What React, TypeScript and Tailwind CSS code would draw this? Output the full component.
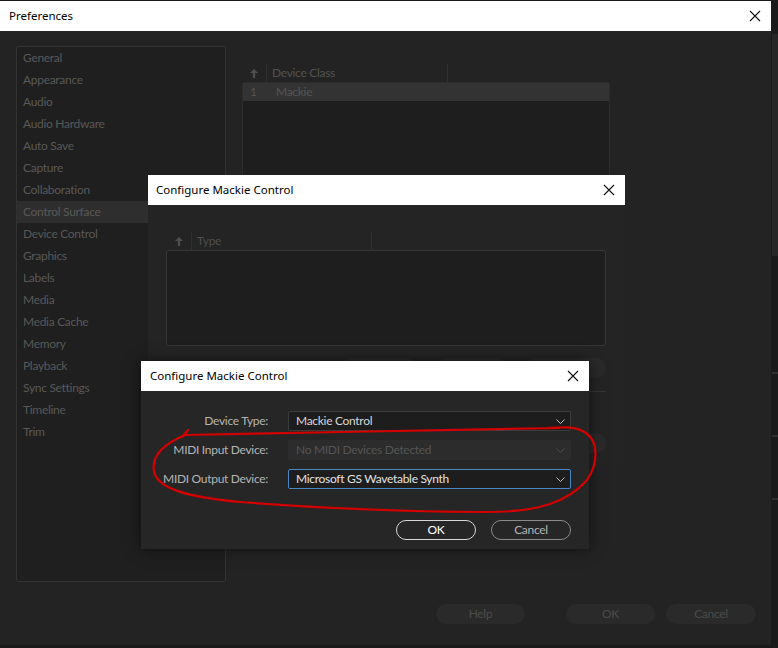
import React from 'react';

const sans = "font-['Noto_Sans',sans-serif]";
const ui = "font-['Lato',sans-serif] tracking-[-0.3px]";

const sections = [
  'General',
  'Appearance',
  'Audio',
  'Audio Hardware',
  'Auto Save',
  'Capture',
  'Collaboration',
  'Control Surface',
  'Device Control',
  'Graphics',
  'Labels',
  'Media',
  'Media Cache',
  'Memory',
  'Playback',
  'Sync Settings',
  'Timeline',
  'Trim',
];

function CloseX() {
  return (
    <svg width="12" height="12" viewBox="0 0 12 12" className="shrink-0">
      <path d="M1 1 L11 11 M11 1 L1 11" stroke="#111" strokeWidth="1.1" fill="none" />
    </svg>
  );
}

function SortArrow() {
  return (
    <svg width="8" height="9" viewBox="0 0 8 9">
      <path d="M4 0 L8 4 L5.2 4 L5.2 9 L2.8 9 L2.8 4 L0 4 Z" fill="#4e4e4e" />
    </svg>
  );
}

function Chevron({ color = '#bdbdbd' }: { color?: string }) {
  return (
    <svg width="9" height="5" viewBox="0 0 9 5" className="shrink-0">
      <path d="M0.5 0.5 L4.5 4.5 L8.5 0.5" stroke={color} strokeWidth="1" fill="none" />
    </svg>
  );
}

function TitleBar({ title, pl = 'pl-[8px]', pr = 'pr-[9px]' }: { title: string; pl?: string; pr?: string }) {
  return (
    <div className={`h-[30px] ${pl} ${pr} bg-white flex items-center justify-between text-[11.5px] tracking-normal text-black ${sans}`}>
      <span>{title}</span>
      <CloseX />
    </div>
  );
}

function GhostPill({ label, w }: { label: string; w: string }) {
  return (
    <div className={`${w} h-[20px] rounded-full bg-[#2a2a2a] text-[#4a4a4a] text-[12px] flex items-center justify-center`}>
      {label}
    </div>
  );
}

function Select({ value, state }: { value: string; state: 'normal' | 'disabled' | 'focus' }) {
  const box =
    state === 'disabled'
      ? 'bg-[#2c2c2c] border-[#2c2c2c] text-[#545454]'
      : state === 'focus'
        ? 'bg-[#1d1d1d] border-[#4b86c6] text-[#e2e2e2]'
        : 'bg-[#1d1d1d] border-[#3c3c3c] text-[#d6d6d6]';
  return (
    <div className={`w-[283px] h-[20px] border rounded-[2px] flex items-center justify-between pl-[7px] pr-[5px] text-[12px] ${box}`}>
      <span>{value}</span>
      <Chevron color={state === 'disabled' ? '#4a4a4a' : '#bdbdbd'} />
    </div>
  );
}

export default function App() {
  return (
    <div className={`relative w-[778px] h-[648px] bg-[#1a1a1a] overflow-hidden ${ui}`}>
      {/* window behind, right edge */}
      <div className="absolute left-[772px] top-[34px] w-[6px] h-[222px] bg-[#262626]" />
      <div className="absolute left-[772px] top-[372px] w-[6px] h-[2px] bg-[#303030]" />
      <div className="absolute left-[772px] top-[435px] w-[6px] h-[2px] bg-[#303030]" />
      <div className="absolute left-[772px] top-[498px] w-[6px] h-[2px] bg-[#303030]" />

      {/* Preferences window */}
      <div className="absolute left-0 top-0 w-[771px] h-[645px] flex flex-col bg-[#232323] border-t border-[#1a1a1a]">
        <TitleBar title="Preferences" pl="pl-[9px]" pr="pr-[10px]" />
        <div className="flex-1 flex gap-[16px] pl-[16px] pt-[15px]">
          <div className="w-[210px] h-[536px] bg-[#1f1f1f] border border-[#323232] rounded-[2px] text-[12px] text-[#585858]">
            {sections.map((s) => (
              <div
                key={s}
                className={`h-[22px] leading-[22px] px-[6px] ${s === 'Control Surface' ? 'bg-[#2e2e2e]' : ''}`}
              >
                {s}
              </div>
            ))}
          </div>
          <div className="pt-[18px] w-[368px]">
            <div className="flex items-center h-[18px] text-[12px] text-[#525252]">
              <div className="w-[25px] h-full flex items-center justify-center border-r border-[#303030]">
                <SortArrow />
              </div>
              <div className="w-[181px] h-full pl-[5px] flex items-center border-r border-[#303030]">Device Class</div>
            </div>
            <div className="h-[200px] bg-[#1e1e1e] border border-[#2c2c2c] rounded-[2px]">
              <div className="h-[18px] bg-[#333333] flex items-center text-[12px] text-[#555555]">
                <span className="w-[33px] pl-[7px]">1</span>
                <span>Mackie</span>
              </div>
            </div>
          </div>
        </div>
        <div className="h-[55px] flex items-start justify-end pr-[15px] pt-[14px] gap-[11px]">
          <div className="mr-[30px]">
            <GhostPill label="Help" w="w-[89px]" />
          </div>
          <GhostPill label="OK" w="w-[89px]" />
          <GhostPill label="Cancel" w="w-[90px]" />
        </div>
      </div>

      {/* first Configure Mackie Control dialog */}
      <div className="absolute left-[148px] top-[175px] w-[477px] h-[289px] flex flex-col bg-[#242424]">
        <TitleBar title="Configure Mackie Control" pr="pr-[10px]" />
        <div className="pl-[18px] pr-[19px] pt-[27px]">
          <div className="flex items-center h-[18px] text-[12px] text-[#4e4e4e]">
            <div className="w-[26px] h-full flex items-center justify-center border-r border-[#303030]">
              <SortArrow />
            </div>
            <div className="w-[180px] h-full pl-[5px] flex items-center border-r border-[#303030]">Type</div>
          </div>
          <div className="h-[96px] bg-[#1e1e1e] border border-[#363636] rounded-[3px]" />
          <div className="flex justify-end gap-[20px] mt-[12px]">
            <GhostPill label="" w="w-[74px]" />
            <GhostPill label="" w="w-[70px]" />
            <GhostPill label="" w="w-[80px]" />
          </div>
          <div className="mt-[13px] h-[1px] bg-[#363636]" />
          <div className="flex justify-end mt-[41px]">
            <GhostPill label="" w="w-[80px]" />
          </div>
        </div>
      </div>

      {/* second Configure Mackie Control dialog */}
      <div className="absolute left-[141px] top-[361px] w-[448px] h-[188px] flex flex-col bg-[#262626] shadow-[0_0_14px_rgba(0,0,0,0.55)]">
        <TitleBar title="Configure Mackie Control" pl="pl-[9px]" pr="pr-[10px]" />
        <div className="pt-[20px] pl-[12px] pr-[18px] text-[12px]">
          <div className="flex flex-col gap-[9px]">
            {[
              { label: 'Device Type:', value: 'Mackie Control', state: 'normal' as const },
              { label: 'MIDI Input Device:', value: 'No MIDI Devices Detected', state: 'disabled' as const },
              { label: 'MIDI Output Device:', value: 'Microsoft GS Wavetable Synth', state: 'focus' as const },
            ].map((r) => (
              <div key={r.label} className="flex items-center gap-[20px]">
                <div className="w-[115px] text-right text-[#b4b4b4] whitespace-nowrap">{r.label}</div>
                <Select value={r.value} state={r.state} />
              </div>
            ))}
          </div>
          <div className="flex justify-end gap-[15px] mt-[31px]">
            <div className="w-[80px] h-[20px] rounded-full border border-[#d8d8d8] text-white flex items-center justify-center">
              OK
            </div>
            <div className="w-[80px] h-[20px] rounded-full border border-[#8a8a8a] text-[#b4b4b4] flex items-center justify-center">
              Cancel
            </div>
          </div>
        </div>
      </div>

      {/* hand-drawn red annotation */}
      <svg className="absolute left-0 top-0 pointer-events-none" width="778" height="648" viewBox="0 0 778 648">
        <path
          d="M560 428 C 480 429 300 433 185 435 C 166 443 151 455 154 471 C 157 489 188 497 240 502 C 320 508 420 512 488 512 C 538 512 568 502 587 480 C 598 464 599 442 586 433 C 576 426 565 427 548 428"
          stroke="#d40000"
          strokeWidth="2.2"
          fill="none"
          strokeLinecap="round"
          strokeLinejoin="round"
        />
        <path d="M182 437 L188 430" stroke="#d40000" strokeWidth="2.2" fill="none" strokeLinecap="round" />
      </svg>
    </div>
  );
}
